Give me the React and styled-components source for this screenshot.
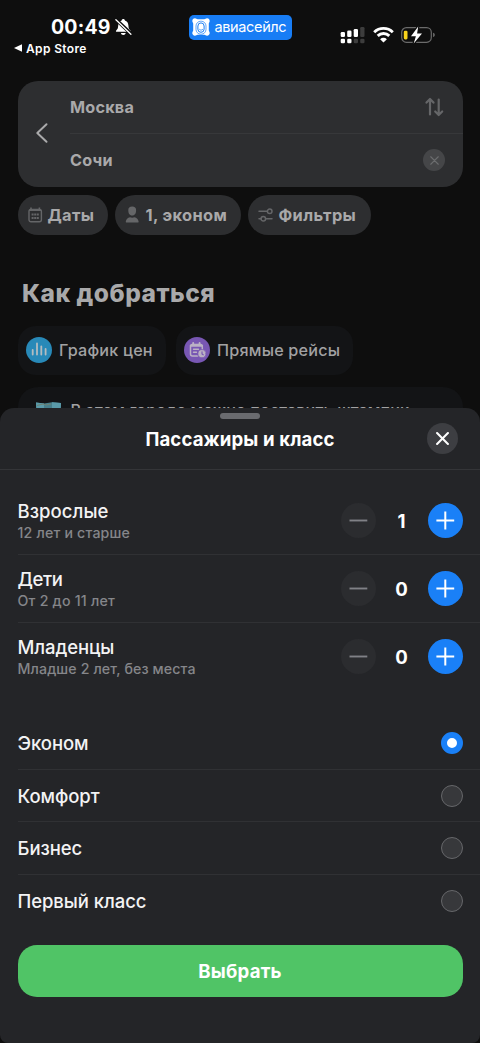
import React from 'react';
import styled, { createGlobalStyle } from 'styled-components';

const Global = createGlobalStyle`
  * { box-sizing: border-box; }
  body { margin: 0; background: #0e0e0e; }
  button { border: 0; padding: 0; margin: 0; background: none; font: inherit; color: inherit; }
  svg { display: block; flex: none; }
`;

const Screen = styled.div`
  position: relative;
  width: 480px;
  height: 1043px;
  overflow: hidden;
  background: #0e0e0e;
  color: #fff;
  font-family: Inter, "Liberation Sans", sans-serif;
  white-space: nowrap;
`;

const StatusBar = styled.header`
  display: grid;
  grid-template-columns: 188px 1fr 140px;
  height: 81px;
`;
const ClockArea = styled.div`
  padding-top: 15px;
`;
const Clock = styled.div`
  display: flex;
  align-items: center;
  gap: 4px;
  height: 24px;
  padding-left: 51px;
  font-size: 19.5px;
  font-weight: 700;
`;
const BackToApp = styled.div`
  display: flex;
  align-items: center;
  gap: 4px;
  height: 18px;
  padding-left: 14px;
  font-size: 12px;
  font-weight: 600;
  letter-spacing: 0.35px;
`;
const BrandBadge = styled.div`
  display: flex;
  align-items: center;
  gap: 5px;
  width: 103px;
  height: 24.5px;
  margin: 15px 0 0 0.5px;
  padding-left: 3px;
  border-radius: 5px;
  background: #187df5;
  font-size: 14.5px;
  line-height: 20px;
`;
const Indicators = styled.div`
  display: flex;
  gap: 7.5px;
  padding-top: 26px;
`;

const SearchCard = styled.section`
  display: grid;
  grid-template-columns: 52.5px 1fr;
  width: 445px;
  height: 105.5px;
  margin-left: 17.5px;
  border-radius: 20px;
  background: #2d2e30;
  overflow: hidden;
`;
const BackButton = styled.button`
  display: flex;
  align-items: center;
  padding: 0 0 1px 17.5px;
`;
const City = styled.div`
  display: flex;
  align-items: center;
  justify-content: space-between;
  height: 52.75px;
  padding-right: ${p => (p.$last ? 17.5 : 18.5)}px;
  border-bottom: ${p => (p.$last ? '0' : '1px solid #37383a')};
  color: #a9a9aa;
  font-size: 16.2px;
  font-weight: 700;
  letter-spacing: 0.22px;
`;
const ClearButton = styled.button`
  display: flex;
  align-items: center;
  justify-content: center;
  width: 22px;
  height: 22px;
  border-radius: 50%;
  background: #454648;
`;

const Pills = styled.div`
  display: flex;
  gap: 6.5px;
  padding: 8.5px 0 0 17.5px;
`;
const Pill = styled.button`
  display: flex;
  align-items: center;
  gap: ${p => p.$gap}px;
  width: ${p => p.$w}px;
  height: 39.5px;
  padding-left: 10px;
  border-radius: 20px;
  background: #2d2e30;
  color: #a9a9aa;
  font-size: 16.4px;
  font-weight: 700;
  letter-spacing: 0.37px;
`;

const Heading = styled.h1`
  margin: 41px 0 0 22px;
  height: 36px;
  line-height: 35px;
  color: #a9a9aa;
  font-size: 24.5px;
  font-weight: 800;
  letter-spacing: 0.5px;
`;
const Chips = styled.div`
  display: flex;
  gap: 9.5px;
  padding: 14px 0 0 17.5px;
`;
const Chip = styled.button`
  display: flex;
  align-items: center;
  gap: 7.5px;
  width: ${p => p.$w}px;
  height: 49px;
  padding-left: 8px;
  border-radius: 18px;
  background: #131416;
  color: #a2a2a3;
  font-size: 16.2px;
  font-weight: 500;
  letter-spacing: 0.2px;
`;
const StampCard = styled.div`
  display: flex;
  gap: 9px;
  width: 445px;
  height: 80px;
  margin: 12.5px 0 0 17.5px;
  padding: 14px 0 0 17px;
  border-radius: 20px;
  background: #131416;
  color: #a2a2a3;
  font-size: 16.2px;
  font-weight: 500;
  line-height: 18px;
  letter-spacing: 0.07px;
`;

const Sheet = styled.section`
  position: absolute;
  left: 0;
  right: 0;
  bottom: 0;
  height: 635px;
  padding-top: 5px;
  border-radius: 14px 14px 8px 8px;
  background: #242528;
`;
const Handle = styled.div`
  width: 40px;
  height: 6px;
  margin: 0 auto;
  border-radius: 3px;
  background: #6a6b6f;
`;
const SheetHeader = styled.div`
  display: grid;
  grid-template-columns: 53px 1fr 53px;
  align-items: center;
  height: 51px;
  padding-bottom: 12px;
  border-bottom: 1px solid #343538;
  text-align: center;
`;
const SheetTitle = styled.h2`
  margin: 0;
  padding-top: 2px;
  font-size: 18.6px;
  font-weight: 700;
  letter-spacing: 0.13px;
`;
const CloseButton = styled.button`
  display: flex;
  align-items: center;
  justify-content: center;
  width: 31px;
  height: 31px;
  border-radius: 50%;
  background: #3d3e42;
`;

const PassengerList = styled.div`
  padding: 17px 0 0 17.5px;
`;
const PassengerRow = styled.div`
  display: flex;
  align-items: center;
  justify-content: space-between;
  height: 68px;
  padding-right: 17.5px;
  border-bottom: 1px solid ${p => (p.$last ? 'transparent' : '#303134')};
`;
const PassengerName = styled.div`
  color: #f3f3f4;
  font-size: 18.5px;
  font-weight: 500;
  line-height: 24px;
  letter-spacing: ${p => p.$ls}px;
`;
const PassengerAge = styled.div`
  color: #85868a;
  font-size: 14.2px;
  font-weight: 500;
  line-height: 19px;
  letter-spacing: ${p => p.$ls}px;
`;
const Stepper = styled.div`
  display: grid;
  grid-template-columns: 35px 52px 35px;
  align-items: center;
  text-align: center;
  font-size: 18.6px;
  font-weight: 700;
`;
const StepButton = styled.button`
  display: flex;
  align-items: center;
  justify-content: center;
  width: 35px;
  height: 35px;
  border-radius: 50%;
  background: ${p => (p.$active ? '#1a80f7' : '#2b2c2f')};
  color: ${p => (p.$active ? '#fff' : '#808186')};
`;

const ClassList = styled.div`
  padding: 26px 0 0 17.5px;
`;
const ClassRow = styled.label`
  display: flex;
  align-items: center;
  justify-content: space-between;
  height: 52.7px;
  padding-right: 17.5px;
  border-bottom: ${p => (p.$last ? '0' : '1px solid #303134')};
  color: #f3f3f4;
  font-size: 18.5px;
  font-weight: 500;
  letter-spacing: -0.07px;
`;
const Radio = styled.span`
  width: 22px;
  height: 22px;
  border-radius: 50%;
  border: ${p => (p.$checked ? '6.5px solid #1a80f7' : '1px solid #66676a')};
  background: ${p => (p.$checked ? '#fff' : '#37383b')};
`;
const Submit = styled.button`
  display: block;
  width: 445px;
  height: 52.5px;
  margin: 17px 0 0 17.5px;
  border-radius: 19px;
  background: #50c466;
  color: #fff;
  font-size: 18.6px;
  font-weight: 700;
  letter-spacing: 0.25px;
`;

const Spaced = styled.span`
  letter-spacing: ${p => p.$ls}px;
`;

const BellOff = () => (
  <svg width="17" height="18" viewBox="0 0 17 18">
    <path d="M8.3 1c.9 0 1.5.6 1.6 1.4 2.2.7 3.4 2.5 3.5 5 .1 3 .8 3.700 2 5 .5.6.3 1.300-.5 1.300H1.700c-.8 0-1-.7-.5-1.300 1.200-1.300 1.900-2 2-5 .1-2.500 1.300-4.300 3.500-5C6.800 1.600 7.400 1 8.300 1zM5.900 14.900h4.800c-.2 1.200-1.100 2-2.400 2s-2.200-.8-2.400-2z" fill="#fff" />
    <path d="M.7 1.200 16.500 16.200" stroke="#0e0e0e" strokeWidth="3.400" />
    <path d="M.9 1.700 15.900 16.200" stroke="#fff" strokeWidth="1.300" strokeLinecap="round" />
  </svg>
);
const BrandMark = () => (
  <svg width="18" height="18" viewBox="0 0 18 18">
    <path d="M3 .3C4.200.3 4.600 1.200 5.700 1.200h6.600c1.100 0 1.500-.9 2.700-.9 1.700 0 2.700 1.300 2.700 2.700 0 1.200-.9 1.600-.9 2.700v6.600c0 1.100.9 1.500.9 2.700 0 1.400-1 2.700-2.700 2.700-1.200 0-1.600-.9-2.700-.9H5.700c-1.100 0-1.500.9-2.700.9-1.700 0-2.700-1.300-2.700-2.700 0-1.200.9-1.600.9-2.700V5.700C1.200 4.600.3 4.200.3 3 .3 1.600 1.300.3 3 .3z" fill="#fff" />
    <rect x="4" y="3.200" width="10" height="13" rx="4.800" fill="none" stroke="#187df5" strokeWidth=".7" />
    <rect x="5.900" y="4.900" width="6.200" height="9.400" rx="3.100" fill="none" stroke="#187df5" strokeWidth="1" />
    <path d="M7.300 11.200c1.200 1.300 2.800 1.100 3.700-.2" fill="none" stroke="#187df5" strokeWidth=".8" />
  </svg>
);
const Signal = () => (
  <svg width="25" height="18" viewBox="0 0 25 18" fill="#fff">
    <rect x=".7" y="6" width="4.300" height="5" rx="1.300" />
    <rect x="7.200" y="4.500" width="4.300" height="6.500" rx="1.300" />
    <rect x="13.700" y="3" width="4.300" height="8" rx="1.300" />
    <rect x="20.200" y="1" width="4.300" height="10" rx="1.300" fill="#3d3d3d" />
    <rect x=".7" y="12.700" width="4.300" height="4.500" rx="1.300" />
    <rect x="7.200" y="12.700" width="4.300" height="4.500" rx="1.300" />
    <rect x="13.700" y="12.700" width="4.300" height="4.500" rx="1.300" fill="#3d3d3d" />
    <rect x="20.200" y="12.700" width="4.300" height="4.500" rx="1.300" fill="#3d3d3d" />
  </svg>
);
const Wifi = () => (
  <svg width="21" height="18" viewBox="0 0 21 18">
    <g fill="none" stroke="#fff" strokeWidth="2.900">
      <path d="M1.200 6.200a13.300 13.300 0 0 1 18.600 0" />
      <path d="M4.700 9.900a8.300 8.300 0 0 1 11.600 0" />
    </g>
    <path d="M10.500 16.600 7.100 13.200a4.900 4.900 0 0 1 6.800 0z" fill="#fff" />
  </svg>
);
const Battery = () => (
  <svg width="35" height="18" viewBox="0 0 35 18">
    <rect x=".7" y="1.600" width="29.600" height="14.700" rx="4.700" fill="none" stroke="#6b6b6b" strokeWidth="1.200" />
    <path d="M32.200 6.800c2 .7 2 3.600 0 4.300z" fill="#777" />
    <rect x="2.800" y="4.700" width="3.700" height="8.700" rx="1.300" fill="#f8d31b" />
    <path d="M17.200.6 10 10.200h4.900l-2.200 7.200 8.300-9.800h-4.900z" fill="#fff" stroke="#0e0e0e" strokeWidth="2.500" paintOrder="stroke" strokeLinejoin="round" />
  </svg>
);
const ChevronLeft = () => (
  <svg width="14" height="22" viewBox="0 0 14 22" fill="none" stroke="#a9a9aa" strokeWidth="2" strokeLinecap="round" strokeLinejoin="round">
    <path d="M11.500 2.300 2.300 11l9.200 8.700" />
  </svg>
);
const Swap = () => (
  <svg width="20" height="20" viewBox="0 0 20 20" fill="none" stroke="#656668" strokeWidth="2.200" strokeLinecap="round" strokeLinejoin="round">
    <path d="M6 17.500V2.300M2.500 5.600 6 2l3.500 3.600M14.700 2.500v15.200M11.200 14.500l3.500 3.500 3.500-3.500" />
  </svg>
);
const Cross = ({ size, color, weight }) => (
  <svg width={size} height={size} viewBox="0 0 12 12" fill="none" stroke={color} strokeWidth={weight} strokeLinecap="round">
    <path d="m1 1 10 10M11 1 1 11" />
  </svg>
);
const Calendar = () => (
  <svg width="15" height="16" viewBox="0 0 15 16" fill="none" stroke="#656668">
    <rect x="1" y="2.400" width="12.400" height="12.400" rx="2" strokeWidth="1.400" />
    <path d="M1.300 3.300h11.800M3 .4v2.500M11.400.4v2.500" strokeWidth="1.600" />
    <path d="M3.600 7.500h2M6.200 7.500h2M8.800 7.500h2M3.600 11h2M6.200 11h2M8.800 11h2" strokeWidth="2" />
  </svg>
);
const Person = () => (
  <svg width="15" height="17" viewBox="0 0 15 17" fill="#656668">
    <path d="M7.200.4c2.600 0 3.900 1.300 3.900 3.700 0 3.200-1 5.500-3.900 5.500S3.300 7.300 3.300 4.100C3.300 1.700 4.600.4 7.200.4zM1.600 16.600c-.7 0-.9-.4-.8-1 .4-2.500 1.800-4 4.200-4.400 1.100.6 3.300.6 4.400 0 2.400.4 3.800 1.900 4.200 4.400.1.600-.1 1-.8 1z" />
  </svg>
);
const Sliders = () => (
  <svg width="15" height="14" viewBox="0 0 15 14" fill="none" stroke="#656668" strokeWidth="1.500" strokeLinecap="round">
    <path d="M1 3.300h8M1 10.700h2M7.600 10.700H14" />
    <circle cx="11.700" cy="3.300" r="2.300" />
    <circle cx="5.300" cy="10.700" r="2.300" />
  </svg>
);
const ChartIcon = () => (
  <svg width="26" height="26" viewBox="0 0 26 26">
    <circle cx="13" cy="13" r="13" fill="#2889b8" />
    <path d="M6.700 13v4.500M11 6.500v11M15.300 9.300v8.200M19.600 12v5.500" stroke="#b4bcc0" strokeWidth="1.800" strokeLinecap="round" />
  </svg>
);
const ScheduleIcon = () => (
  <svg width="26" height="26" viewBox="0 0 26 26" fill="none" stroke="#bbb2c5" strokeLinecap="round">
    <circle cx="13" cy="13" r="13" fill="#7857b3" stroke="none" />
    <path d="M13.500 19H8.500a2 2 0 0 1-2-2V9.500a2 2 0 0 1 2-2h7.800a2 2 0 0 1 2 2v2.800" strokeWidth="1.500" />
    <path d="M6.700 8.700h11.500M9.200 6v2M15.600 6v2" strokeWidth="1.900" />
    <path d="M9.500 12.300h5M9.500 15.300h3" strokeWidth="1.400" />
    <circle cx="18" cy="16.700" r="4.100" fill="#bbb2c5" stroke="#7857b3" strokeWidth=".8" />
    <path d="M18 14.700v2.300l1.200.8" stroke="#7857b3" strokeWidth="1.100" />
  </svg>
);
const MapIcon = () => (
  <svg width="27" height="22" viewBox="0 0 27 22">
    <path d="m1 1.500 8 1 8-1.200 9 .7-1 19-8-1-8 1-7-1z" fill="#477f8c" />
    <path d="m1 1.500 8 1 .4 19-7.400-1zM17 1.300l9 .7-1 19-8-1z" fill="#5a9aa9" />
    <path d="M2 4.500 8 3l3 1 5-1" fill="none" stroke="#6d8173" />
  </svg>
);
const Minus = () => (
  <svg width="19" height="19" viewBox="0 0 19 19" stroke="currentColor" strokeWidth="1.900"><path d="M.5 9.500h17.800" /></svg>
);
const Plus = () => (
  <svg width="19" height="19" viewBox="0 0 19 19" stroke="currentColor" strokeWidth="2"><path d="M.4 9.500h17.800M9.300.6v17.800" /></svg>
);

const passengers = [
  { name: 'Взрослые', age: '12 лет и старше', count: 1, nameSpacing: 0.07, ageSpacing: 0.18 },
  { name: 'Дети', age: 'От 2 до 11 лет', count: 0, nameSpacing: -0.4, ageSpacing: 0.22 },
  { name: 'Младенцы', age: 'Младше 2 лет, без места', count: 0, nameSpacing: -0.1, ageSpacing: 0.11 },
];
const classes = ['Эконом', 'Комфорт', 'Бизнес', 'Первый класс'];

export default function App() {
  return (
    <Screen>
      <Global />
      <StatusBar>
        <ClockArea>
          <Clock><Spaced $ls={0.2}>00:49</Spaced><BellOff /></Clock>
          <BackToApp>
            <svg width="8" height="8" viewBox="0 0 8 8"><path d="M0 4 8 .2v7.600z" fill="#fff" /></svg>
            App Store
          </BackToApp>
        </ClockArea>
        <BrandBadge><BrandMark /><Spaced $ls={-0.36}>авиасейлс</Spaced></BrandBadge>
        <Indicators><Signal /><Wifi /><Battery /></Indicators>
      </StatusBar>

      <SearchCard>
        <BackButton><ChevronLeft /></BackButton>
        <div>
          <City>Москва<Swap /></City>
          <City $last>Сочи<ClearButton><Cross size={9} color="#6b6c6e" weight={1.5} /></ClearButton></City>
        </div>
      </SearchCard>
      <Pills>
        <Pill $w={90.5} $gap={5}><Calendar />Даты</Pill>
        <Pill $w={126.5} $gap={6}><Person />1, эконом</Pill>
        <Pill $w={123.5} $gap={6}><Sliders />Фильтры</Pill>
      </Pills>

      <Heading>Как добраться</Heading>
      <Chips>
        <Chip $w={148.5}><ChartIcon />График цен</Chip>
        <Chip $w={177}><ScheduleIcon />Прямые рейсы</Chip>
      </Chips>
      <StampCard><MapIcon />В этом городе можно поставить штампик</StampCard>

      <Sheet>
        <Handle />
        <SheetHeader>
          <span />
          <SheetTitle>Пассажиры и класс</SheetTitle>
          <CloseButton><Cross size={13} color="#fff" weight={1.9} /></CloseButton>
        </SheetHeader>
        <PassengerList>
          {passengers.map((p, i) => (
            <PassengerRow key={p.name} $last={i === passengers.length - 1}>
              <div>
                <PassengerName $ls={p.nameSpacing}>{p.name}</PassengerName>
                <PassengerAge $ls={p.ageSpacing}>{p.age}</PassengerAge>
              </div>
              <Stepper>
                <StepButton><Minus /></StepButton>
                {p.count}
                <StepButton $active><Plus /></StepButton>
              </Stepper>
            </PassengerRow>
          ))}
        </PassengerList>
        <ClassList>
          {classes.map((name, i) => (
            <ClassRow key={name} $last={i === classes.length - 1}>
              {name}
              <Radio $checked={i === 0} />
            </ClassRow>
          ))}
        </ClassList>
        <Submit>Выбрать</Submit>
      </Sheet>
    </Screen>
  );
}
